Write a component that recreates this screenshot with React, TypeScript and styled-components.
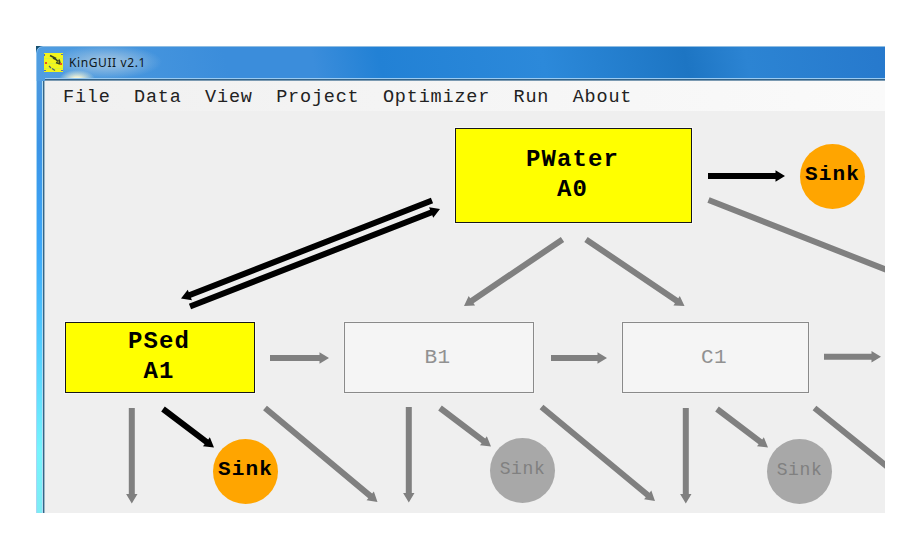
import React from "react";
import styled, { createGlobalStyle } from "styled-components";

const GlobalStyle = createGlobalStyle`
  * { box-sizing: border-box; }
  body { margin: 0; background: #fff; }
`;

const mono = `"Liberation Mono", "Courier New", monospace`;

const Page = styled.main`
  width: 924px;
  height: 542px;
  padding: 46px 39px 29px 36px;
  overflow: hidden;
  background: #fff;
`;

const Backdrop = styled.div`
  height: 467px;
  background: #17506f;
`;

const Window = styled.section`
  display: grid;
  grid-template-columns: 9px 1fr;
  grid-template-rows: 35px 432px;
  width: 849px;
  height: 467px;
  overflow: hidden;
  border-radius: 7px 0 0 0;
  background: #3d92dc;
`;

const TitleBar = styled.header`
  grid-column: 1 / -1;
  display: flex;
  align-items: center;
  gap: 6px;
  padding: 0 0 2px 8px;
  border-radius: 7px 0 0 0;
  box-shadow: inset 0 1px #8fbde2, inset 1px 0 #8fc4ee;
  background:
    linear-gradient(#9acbf2, #9acbf2) 9px 32px / 100% 1px no-repeat,
    linear-gradient(#356387, #356387) 9px 33px / 100% 1px no-repeat,
    linear-gradient(#7b9ab2, #7b9ab2) 9px 34px / 100% 1px no-repeat,
    radial-gradient(ellipse 18px 9px at 41px 33px, #f3f3d5 0 20%, transparent 100%),
    radial-gradient(ellipse 56px 17px at 70px 16px, #8dbae1 30%, transparent 100%),
    linear-gradient(78deg, #519ee1 0, #3b8ddb 190px, #3b8ddb 275px, #2281d5 340px,
      #2c89da 500px, #1d75c3 640px, #2c84d3 700px, #2678cc 850px);
`;

const AppIcon = styled.svg`
  display: block;
  width: 19px;
  height: 19px;
`;

const Title = styled.h1`
  margin: 0;
  font: 400 12px/18px "Noto Sans", "Open Sans", sans-serif;
  letter-spacing: 0.6px;
  color: #0c1722;
`;

const Edge = styled.div`
  background:
    linear-gradient(90deg, #a6d6f4 0 1px, transparent 1px 6px, #b2def5 6px 7px, #366587 7px 8px, #9cb6c5 8px),
    linear-gradient(#4b98df, #3b94e6 65px, #3ca8fa 165px, #52ceff 265px, #76f4fd 370px, #7eebf4 432px);
`;

const Client = styled.div`
  display: flex;
  flex-direction: column;
  min-width: 0;
  background: #efefef;
`;

const MenuBar = styled.nav`
  display: flex;
  flex: 0 0 30px;
  align-items: center;
  gap: 23.4px;
  padding: 4px 0 0 18px;
  background: linear-gradient(90deg, #f0f0f0, #f6f6f6 60%, #fafafa);
`;

const MenuItem = styled.span`
  font: 400 18.5px/24px ${mono};
  letter-spacing: 0.81px;
  color: #222;
`;

const Canvas = styled.div`
  position: relative;
  flex: 1;
  overflow: hidden;
`;

const Arrows = styled.svg`
  position: absolute;
  inset: 0;
  width: 840px;
  height: 402px;
`;

const Box = styled.div<{ $x: number; $y: number; $w: number; $h: number; $active?: boolean }>`
  position: absolute;
  left: ${(p) => p.$x - 45}px;
  top: ${(p) => p.$y - 111}px;
  width: ${(p) => p.$w}px;
  height: ${(p) => p.$h}px;
  display: flex;
  flex-direction: column;
  align-items: center;
  justify-content: center;
  padding: ${(p) => (p.$active ? "0 2px 1px 0" : "0 3px 0 0")};
  border: 1px solid ${(p) => (p.$active ? "#181818" : "#8a8a8a")};
  outline: 1px solid ${(p) => (p.$active ? "#f7f7f7" : "#f3f3f3")};
  background: ${(p) => (p.$active ? "#ff0" : "#f5f5f5")};
  color: ${(p) => (p.$active ? "#000" : "#919191")};
  font: ${(p) => (p.$active ? `700 24px/30px ${mono}` : `400 21px/28px ${mono}`)};
  letter-spacing: ${(p) => (p.$active ? "1.1px" : "0.3px")};
`;

const Sink = styled.div<{ $x: number; $y: number; $active?: boolean }>`
  position: absolute;
  left: ${(p) => p.$x - 45}px;
  top: ${(p) => p.$y - 111}px;
  width: 65px;
  height: 65px;
  display: grid;
  place-items: center;
  padding-bottom: ${(p) => (p.$active ? "3px" : "4px")};
  border-radius: 50%;
  background: ${(p) => (p.$active ? "#ffa500" : "#a8a8a8")};
  color: ${(p) => (p.$active ? "#000" : "#808080")};
  font: ${(p) => (p.$active ? `700 21px/24px ${mono}` : `400 18px/22px ${mono}`)};
  letter-spacing: ${(p) => (p.$active ? "1.2px" : "0.6px")};
`;

type ArrowData = [number, number, number, number, boolean?];

const arrows: ArrowData[] = [
  [432, 200.5, 181, 298.5, true],
  [190, 306.5, 440, 209, true],
  [708, 176, 785, 176, true],
  [708.5, 200, 920, 283],
  [562.5, 239.5, 464, 306],
  [586, 239.5, 684.5, 306],
  [270, 358, 329, 358],
  [551, 358, 607, 358],
  [824, 356.8, 881, 356.8],
  [131.8, 408, 131.8, 503.5],
  [163, 409, 214, 447.5, true],
  [265, 408, 377.5, 502],
  [408.8, 407, 408.8, 502.5],
  [440, 408, 491, 446.5],
  [541.5, 407, 655, 501],
  [685.8, 408, 685.8, 503.5],
  [717, 409, 768, 447.5],
  [814.5, 408, 920, 493],
];

const Arrow = ({ data: [x1, y1, x2, y2, active] }: { data: ArrowData }) => {
  const length = Math.hypot(x2 - x1, y2 - y1);
  const angle = (Math.atan2(y2 - y1, x2 - x1) * 180) / Math.PI;
  const neck = length - 9.5;
  return (
    <path
      transform={`translate(${x1 - 45} ${y1 - 111}) rotate(${angle})`}
      d={`M0-3H${neck}V-5.7L${length} 0 ${neck} 5.7V3H0Z`}
      fill={active ? "#000" : "#808080"}
    />
  );
};

const menus = ["File", "Data", "View", "Project", "Optimizer", "Run", "About"];

export default function App() {
  return (
    <Page>
      <GlobalStyle />
      <Backdrop>
        <Window>
          <TitleBar>
            <AppIcon viewBox="0 0 19 19" aria-hidden="true">
              <rect width="19" height="19" fill="#f2f51d" />
              <path d="M0 5.5H19M0 10.5H19M0 15.5H19" stroke="#d7f23a" strokeWidth="1" />
              <path d="M6 2.5l3 1.5 3 1.5M9 5l3 1.5 2 2M12 9.5l4 1.5M15 6.5l1 4" stroke="#3a4620" strokeWidth="1.7" fill="none" />
              <path d="M5 13l2 2M8 15.5l3 2" stroke="#4c6575" strokeWidth="1.3" fill="none" />
              <path d="M1 9h2v2H1zM16 10h2v2h-2z" fill="#ed5125" />
              <path d="M0 1h1v2H0zM17 1h2v1h-2zM0 17h2v1H0zM17 17h2v1h-2z" fill="#546fae" />
            </AppIcon>
            <Title>KinGUII v2.1</Title>
          </TitleBar>
          <Edge />
          <Client>
            <MenuBar>
              {menus.map((name) => (
                <MenuItem key={name}>{name}</MenuItem>
              ))}
            </MenuBar>
            <Canvas>
              <Arrows viewBox="0 0 840 402" aria-hidden="true">
                {arrows.map((data, i) => (
                  <Arrow key={i} data={data} />
                ))}
              </Arrows>
              <Box $x={455} $y={128} $w={237} $h={95} $active>
                <span>PWater</span>
                <span>A0</span>
              </Box>
              <Box $x={65} $y={322} $w={190} $h={71} $active>
                <span>PSed</span>
                <span>A1</span>
              </Box>
              <Box $x={344} $y={322} $w={190} $h={71}>B1</Box>
              <Box $x={622} $y={322} $w={187} $h={71}>C1</Box>
              <Sink $x={800} $y={144} $active>Sink</Sink>
              <Sink $x={213} $y={439} $active>Sink</Sink>
              <Sink $x={490} $y={438}>Sink</Sink>
              <Sink $x={767} $y={439}>Sink</Sink>
            </Canvas>
          </Client>
        </Window>
      </Backdrop>
    </Page>
  );
}
